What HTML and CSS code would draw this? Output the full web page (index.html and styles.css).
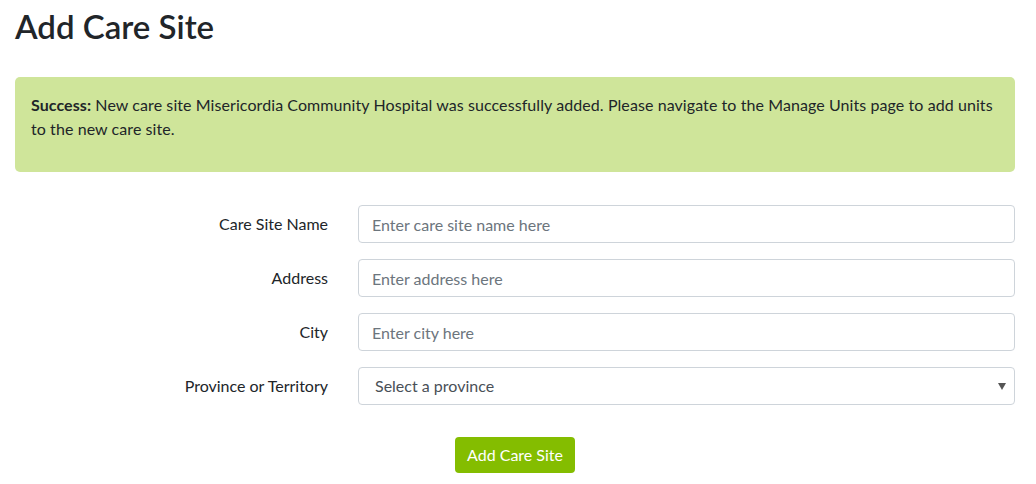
FILE: index.html
```html
<!DOCTYPE html>
<html lang="en">
<head>
<meta charset="utf-8">
<title>Add Care Site</title>
<link rel="stylesheet" href="styles.css">
</head>
<body>
<div class="page">
  <h2 class="title">Add Care Site</h2>
  <div class="alert">
    <p><strong>Success:</strong> New care site Misericordia Community Hospital was successfully added. Please navigate to the Manage Units page to add units to the new care site.</p>
  </div>
  <form class="form">
    <div class="row">
      <label class="label" for="name">Care Site Name</label>
      <input class="control" id="name" type="text" placeholder="Enter care site name here">
    </div>
    <div class="row">
      <label class="label" for="address">Address</label>
      <input class="control" id="address" type="text" placeholder="Enter address here">
    </div>
    <div class="row">
      <label class="label" for="city">City</label>
      <input class="control" id="city" type="text" placeholder="Enter city here">
    </div>
    <div class="row">
      <label class="label" for="prov">Province or Territory</label>
      <div class="select-wrap">
        <select class="control select" id="prov">
          <option>Select a province</option>
        </select>
        <svg class="caret" width="8" height="7" viewBox="0 0 8 7"><path d="M0 0H8L4 7Z" fill="#555"/></svg>
      </div>
    </div>
    <div class="actions">
      <button class="btn" type="button">Add Care Site</button>
    </div>
  </form>
</div>
</body>
</html>
```

FILE: styles.css
```css
* { box-sizing: border-box; }
html, body { margin: 0; padding: 0; background: #fff; }
body {
  font-family: Lato, "Liberation Sans", sans-serif;
  font-size: 16px;
  line-height: 1.5;
  color: #212529;
}
.page { padding: 0 21px 0 15px; }
.title {
  margin: 0;
  padding-top: 7px;
  height: 77px;
  font-size: 33px;
  font-weight: 600;
  line-height: 38px;
  color: #212529;
}
.alert {
  background: #cfe59a;
  border-radius: 5px;
  padding: 16px 16px 15px 16px;
  height: 95px;
}
.alert p { margin: 0; letter-spacing: 0.08px; }
.alert strong { font-weight: 700; }
.form { margin-top: 33px; }
.row {
  display: grid;
  grid-template-columns: 313px 1fr;
  column-gap: 30px;
  align-items: center;
  margin-bottom: 16px;
}
.label { text-align: right; }
.control {
  display: block;
  width: 100%;
  height: 38px;
  padding: 6px 13px;
  font: inherit;
  color: #495057;
  background: #fff;
  border: 1px solid #ced4da;
  border-radius: 4px;
  outline: none;
}
.control::placeholder { color: #6c757d; opacity: 1; }
.select-wrap { position: relative; }
.select {
  appearance: none;
  -webkit-appearance: none;
  padding-left: 16px;
}
.caret { position: absolute; right: 9px; top: 16px; }
.actions { display: flex; justify-content: center; padding-top: 16px; }
.btn {
  height: 36px;
  padding: 0 12px;
  font: inherit;
  color: #fff;
  background: #84bd00;
  border: 0;
  border-radius: 4px;
}
```
